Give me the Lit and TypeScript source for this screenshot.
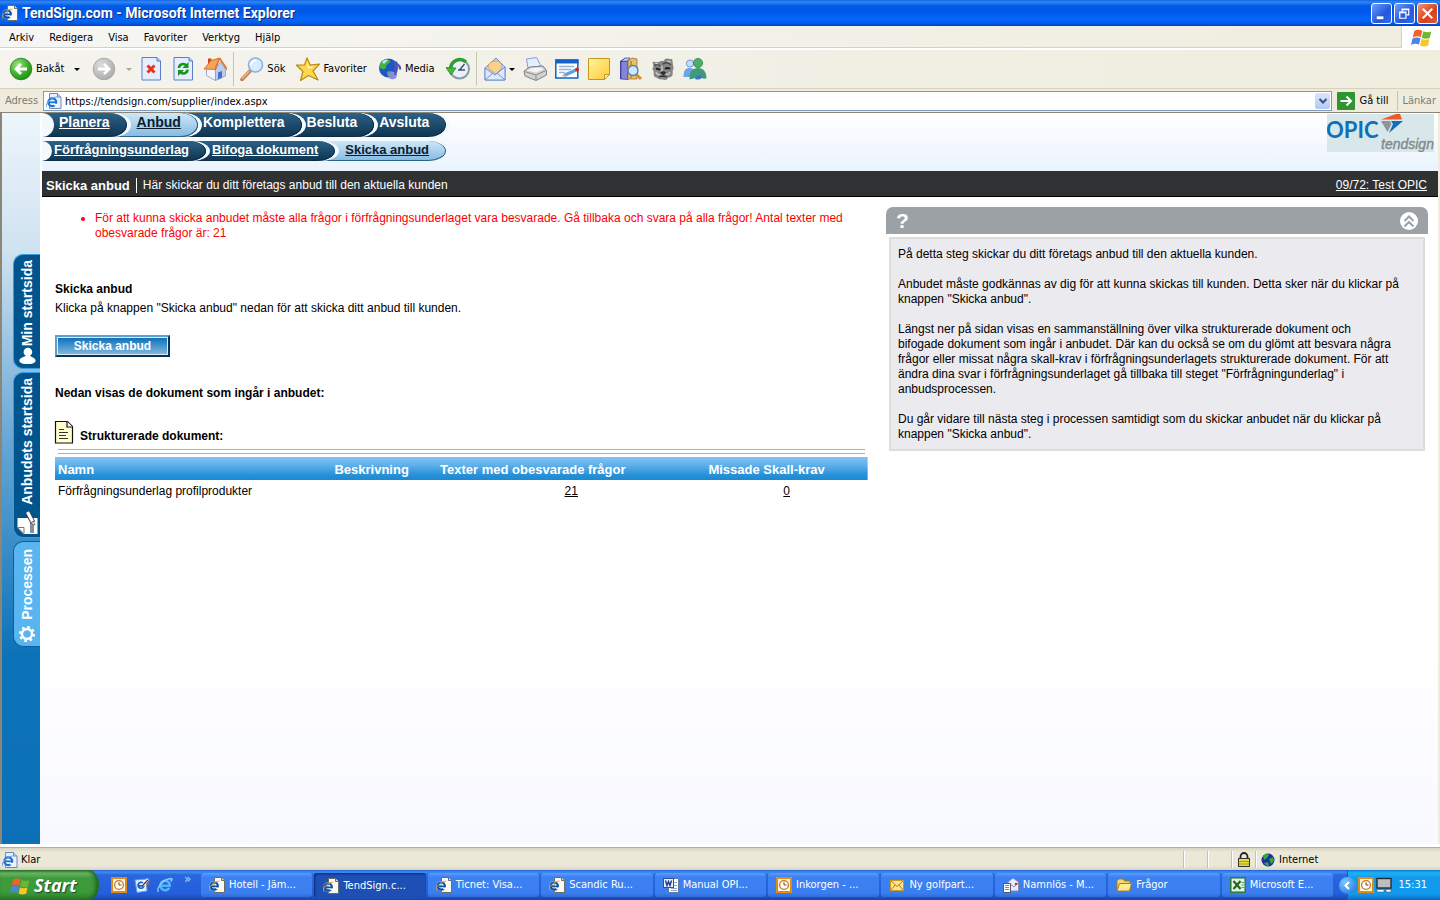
import { LitElement, html, css, svg, nothing, TemplateResult } from "lit";
import { customElement, property } from "lit/decorators.js";
import { classMap } from "lit/directives/class-map.js";

const E_GLYPH = svg`
  <circle cx="8" cy="8.5" r="4.6" fill="none" stroke="#1b6fd0" stroke-width="2.6"/>
  <path d="M4 8.6h8.6" stroke="#1b6fd0" stroke-width="2"/>
  <path d="M9.5 10.3h5v2.2h-4z" fill="#fff"/>
  <path d="M1 14.5C-.5 11 6 2.5 14.6 2" fill="none" stroke="#59a8ee" stroke-width="1.3"/>`;

const PAGE = svg`<path d="M5.500.5h7l3 3v12h-10z" fill="#fbfaf2" stroke="#6c6c66"/><path d="M12.500.5v3h3" fill="#ddd" stroke="#6c6c66"/>`;

const CLOCK = svg`
  <rect x="1" y="1" width="14" height="14" fill="#fff6e0" stroke="#e08a1c" stroke-width="2"/>
  <circle cx="8" cy="8" r="4.4" fill="#fff" stroke="#c8741a" stroke-width="1.3"/>
  <path d="M8 5.2V8h2.4" fill="none" stroke="#6b4a20"/>`;

const FLAG = svg`
  <path d="M2.6 3.2C5 1.6 7 2 9 3L7.8 8.2C5.8 7.2 3.8 7.2 1.4 8.4z" fill="#f0612c"/>
  <path d="M9.8 3.3c2 1 4 1.2 6.4.2L15 8.8c-2.400.9-4.300.8-6.400-.2z" fill="#6cb82f"/>
  <path d="M1.200 9.200c2.400-1.200 4.400-1.100 6.400-.2L6.400 14.200C4.400 13.200 2.400 13.200 0 14.400z" fill="#4a86e0"/>
  <path d="M8.400 9.400c2 1 4 1.200 6.400.2L13.600 14.900c-2.400.9-4.400.8-6.400-.2z" fill="#f8c52c"/>`;

const ICONS: Record<string, { box: number; art: TemplateResult | unknown }> = {
  iepage: { box: 16, art: svg`${PAGE}<g transform="translate(-.5 3) scale(.72)"><circle cx="8" cy="8.500" r="7" fill="#fff" opacity=".6"/><circle cx="8" cy="8.500" r="5" fill="none" stroke="#0b4fa8" stroke-width="3"/><path d="M4 8.800h9" stroke="#0b4fa8" stroke-width="2.200"/><path d="M10 10.500h6v2.300h-5z" fill="#fff"/><path d="M1 15C-.5 11 6 2 15 1.500" fill="none" stroke="#e8a020" stroke-width="1.300"/></g>` },
  iedoc: { box: 16, art: svg`<path d="M3.500.5h8l3.500 3.500v11.500H3.500z" fill="#e8f0ff" stroke="#7088b8"/><path d="M11.500.5V4H15" fill="#c0d0f0" stroke="#7088b8"/><g transform="translate(-.5 2) scale(.85)">${E_GLYPH}</g>` },
  ielight: { box: 16, art: svg`<path d="M12.200 10.800A4.700 4.700 0 1 1 12.800 8.700H4" fill="none" stroke="#54b4f8" stroke-width="2.500"/><path d="M1.500 15C-1 12 5 2 14.500 1.500c1.500.5 0 2-1 3" fill="none" stroke="#8ed0ff" stroke-width="1.300"/>` },
  flag: { box: 16, art: FLAG },
  clock: { box: 16, art: CLOCK },
  back: { box: 24, art: svg`<defs><radialGradient id="backfill" cx=".35" cy=".3" r=".8"><stop offset="0" stop-color="#9be37c"/><stop offset=".6" stop-color="#3aae2a"/><stop offset="1" stop-color="#1d8416"/></radialGradient></defs><circle cx="12" cy="12" r="10.800" fill="url(#backfill)" stroke="#2a7f22" stroke-width=".8"/><path d="M18 12H8M12 7l-5 5 5 5" fill="none" stroke="#fff" stroke-width="2.800"/>` },
  forward: { box: 24, art: svg`<defs><radialGradient id="forwardfill" cx=".35" cy=".3" r=".8"><stop offset="0" stop-color="#dcdcdc"/><stop offset="1" stop-color="#a9a9a9"/></radialGradient></defs><circle cx="12" cy="12" r="10.800" fill="url(#forwardfill)" stroke="#a0a0a0" stroke-width=".8"/><path d="M6 12h10M12 7l5 5-5 5" fill="none" stroke="#fff" stroke-width="2.800"/>` },
  stop: { box: 24, art: svg`<path d="M3 .5h15L21.500 4v19H3z" fill="#e4eeff" stroke="#5b7fc8"/><path d="M18 .5V4h3.500" fill="#b8ccf4" stroke="#5b7fc8"/><path d="M8.500 8.500l7 7M15.500 8.500l-7 7" stroke="#e8341c" stroke-width="3"/>` },
  refresh: { box: 24, art: svg`<path d="M3 .5h15L21.500 4v19H3z" fill="#e4eeff" stroke="#5b7fc8"/><path d="M18 .5V4h3.500" fill="#b8ccf4" stroke="#5b7fc8"/><path d="M8 11c0-4 5-5 7.500-2.500" fill="none" stroke="#16951c" stroke-width="2.500"/><path d="M17.500 5v6h-6z" fill="#16951c"/><path d="M16.500 12.500c0 4-5 5-7.500 2.500" fill="none" stroke="#16951c" stroke-width="2.500"/><path d="M7 19v-6h6z" fill="#16951c"/>` },
  home: { box: 24, art: svg`<path d="M5 1.500h3.500v7H5z" fill="#c84a1c"/><path d="M3.500 12v6.500l9 5V13L8 8z" fill="#f4f6ff" stroke="#8a9cc8" stroke-width=".8"/><path d="M12.500 23.500V12l5-7 5 7v7z" fill="#b9ccf2" stroke="#8a9cc8" stroke-width=".8"/><path d="M1 12l7-8.500L16.500 1 12 12.500z" fill="#f6a456" stroke="#d0641c" stroke-width=".8"/><path d="M16.500 1L12 13M16.500 1L24 12.500" fill="none" stroke="#e07830" stroke-width="1.800"/><path d="M15 15.500l4-1.500v6.500l-4 2z" fill="#4d6fc0"/>` },
  search: { box: 24, art: svg`<path d="M10 14L2 22.500" stroke="#c07a50" stroke-width="3.600" stroke-linecap="round"/><path d="M9.500 14L2 22" stroke="#f0b890" stroke-width="1.400"/><circle cx="15.500" cy="8" r="7" fill="#d8ecff" stroke="#8db0e0" stroke-width="1.600"/><path d="M11 8a5 5 0 0 1 5-4.500" fill="none" stroke="#fff" stroke-width="2"/>` },
  star: { box: 24, art: svg`<path d="M11 1l3.200 7.200 9.300-1-6.500 6.800 5 9-9.500-4.500L4.500 23.500l2.500-9L.5 8.200l8-.2z" fill="#ffd84a" stroke="#b98a12" stroke-width="1.200" stroke-linejoin="round"/><path d="M11 4l2 5.500 6-.5-7 3z" fill="#fff6b8"/>` },
  media: { box: 24, art: svg`<circle cx="10.500" cy="11" r="9.500" fill="#1f56c4"/><path d="M3 5c4-4 8-3 9-1s-4 3-4 6-5 3-6.500 0zM9 15c2-2 6-1 6 1-1 3-4 3-6 2z" fill="#3fb53c"/><path d="M4 5c2-2 4-2.500 6-2l-4 4z" fill="#bfe8ff"/><ellipse cx="14.500" cy="18.500" rx="4.200" ry="3.800" fill="#8c8ce0"/><path d="M17.500 18V4.500c1 4 5.500 3 4.500 8" fill="none" stroke="#5454b0" stroke-width="2.200"/>` },
  history: { box: 24, art: svg`<circle cx="13.500" cy="12" r="9.500" fill="#e9f1f8" stroke="#8d98a5" stroke-width="2"/><path d="M13.500 13l5-6M12 13h7" stroke="#405068" stroke-width="1.400"/><path d="M4.500 13c0-10 10-13 15.500-8" fill="none" stroke="#2f9e32" stroke-width="3.400"/><path d="M0 10.500l10 .5-5 7z" fill="#45b843" stroke="#1d7a20" stroke-width=".7"/>` },
  mail: { box: 24, art: svg`<path d="M2 11L13 1l9 9v13H2z" fill="#c4d8fa" stroke="#6f8fd0"/><path d="M5 11c0-5 4-7 8-7s6 3 6 7l-6 6z" fill="#fbd08a" stroke="#d89848" stroke-width=".8"/><path d="M2 11l10 7 10-8v13H2z" fill="#dceaff" stroke="#6f8fd0"/><path d="M2 23l8-7M22 23l-8-7" stroke="#6f8fd0"/>` },
  print: { box: 24, art: svg`<path d="M5 11L3.500 2l10-1.500L18 9z" fill="#e3eeff" stroke="#7f9fd8"/><path d="M1 14l6-4 13-1 3.500 4.500v4.500L13 23.500 2 19z" fill="#d2d2d2" stroke="#808080"/><path d="M1.500 14.500L13 18l10-4.500" fill="none" stroke="#8a8a8a"/><path d="M13 18v5" stroke="#8a8a8a"/><path d="M4 13.500l5-2.500 9-.5 2 2-7 3z" fill="#f4f4f4"/>` },
  edit: { box: 24, art: svg`<rect x=".8" y="3" width="22" height="18" fill="#fff" stroke="#1262c8" stroke-width="1.500"/><path d="M.5 2.500h23v4H.5z" fill="#1262c8"/><path d="M4 9.500h15M4 12.500h12M4 15.500h6" stroke="#9ab4d8" stroke-width="1.300"/><path d="M9 18.500l12-5.500" stroke="#5b9ff0" stroke-width="3.400"/><path d="M6.500 19.500l3-3 1.200 2.500z" fill="#e8b060"/><circle cx="22" cy="12.500" r="2" fill="#d02c1c"/>` },
  note: { box: 24, art: svg`<defs><linearGradient id="notefill" x2="1" y2="1"><stop offset="0" stop-color="#fff6a0"/><stop offset="1" stop-color="#ffc936"/></linearGradient></defs><path d="M1.500 1.500h21v16l-5 5h-16z" fill="url(#notefill)" stroke="#c8961a"/><path d="M22.500 17.500h-5v5z" fill="#fff0a0" stroke="#c8961a"/>` },
  research: { box: 24, art: svg`<path d="M1 4l5-3v19l-5 2.500z" fill="#4a4aa8"/><path d="M2 22V4.500l7-.5v18.500z" fill="#8484d8" stroke="#38388c" stroke-width=".7"/><path d="M2 4.500L6 1h5L9 4z" fill="#c8c8f4" stroke="#38388c" stroke-width=".7"/><path d="M9 4l4-3 5 1v20H9z" fill="#e8c070" stroke="#8a6420" stroke-width=".7"/><path d="M12 4v17" stroke="#8a6420"/><path d="M17 17l5 5" stroke="#d89030" stroke-width="3"/><circle cx="14" cy="13.500" r="5" fill="#cfe6ff" stroke="#5a7ab0" stroke-width="1.300"/>` },
  bulldog: { box: 24, art: svg`<path d="M1.500 5c3-.5 4 .5 6 0s2.500-2 4-1 2-2.500 4-2.500 3 1 5.500.5c1 2.500.5 4 1 6s1 3 0 5 .5 4-1 6-3 .5-4.500 2.500-3 1.500-5 1-3 .5-4.500-1S4 21 3 19 3.500 15 2 13s1-3 .5-4.500S2 6.500 1.500 5z" fill="#858585"/><path d="M3 9c2-2 4-2 6 0M12 7c2-1.500 5-2 8 1" fill="none" stroke="#4a4a4a" stroke-width="1.600"/><path d="M5 12c2-1 3 0 4 1M14 12c2-1.500 4-1 5 0" fill="none" stroke="#1f1f1f" stroke-width="2"/><path d="M11 9v6M5 15c1 3 3 3 4 2M19 15c-1 2-2 3-4 2" fill="none" stroke="#c9c9c9" stroke-width="1.400"/><path d="M9.500 15.500c2-1 4-1 5 0l-2 2.500zM8 20c2-1.500 6-1.500 8 0" fill="#2c2c2c" stroke="#2c2c2c"/><path d="M4 6l3 1M16 4l4 1" stroke="#d8d8d8"/>` },
  messenger: { box: 24, art: svg`<circle cx="7" cy="6.500" r="3.600" fill="#c4ddff" stroke="#5b86c8" stroke-width=".8"/><path d="M.5 20c0-7 2-9 6.500-9s5.500 4 5.500 9z" fill="#6ea4e8"/><circle cx="15" cy="6" r="4.600" fill="#4fae62" stroke="#2c7e5c" stroke-width=".8"/><path d="M6.500 22.500c0-8 3-11.500 8.500-11.500s8.500 4 8.500 10c-2 2-4 0-6-1s-6 2-11 2.500z" fill="#3f9a78"/><path d="M12 22c1-4 5-5 8-2-3 3-6 3-8 2z" fill="#3b74c4"/>` },
  go: { box: 18, art: svg`<rect width="18" height="18" rx="1" fill="#2e962e"/><path d="M3.500 9h10M9.500 4.500L14 9l-4.500 4.500" fill="none" stroke="#fff" stroke-width="2"/>` },
  caret: { box: 8, art: svg`<path d="M1 3h6L4 6z" fill="currentColor"/>` },
  chevdown: { box: 10, art: svg`<path d="M1.500 3L5 6.500 8.500 3" fill="none" stroke="#3a5180" stroke-width="2"/>` },
  minimize: { box: 20, art: svg`<path d="M5 13h7v3H5z" fill="#fff"/>` },
  restore: { box: 20, art: svg`<path d="M7.500 9V5.500h7v6H12M7 5.800h8" fill="none" stroke="#fff" stroke-width="1.300"/><path d="M5 8.500h6.500V15H5zM4.500 9h7.500" fill="none" stroke="#fff" stroke-width="1.300"/>` },
  close: { box: 20, art: svg`<path d="M5 5l10 10M15 5L5 15" stroke="#fff" stroke-width="2.200"/>` },
  person: { box: 20, art: svg`<circle cx="11" cy="5.500" r="4.800" fill="#fff"/><path d="M9 8.500h4c0 3 6.500 2.500 6.500 6.500 0 3-4 4-9 4s-9-1-9-4c0-4 7.500-3.500 7.500-6.500z" fill="#fff"/>` },
  docpen: { box: 24, art: svg`<path d="M2.500 8h20v16H8.500l-6-6z" fill="#fff"/><path d="M2.500 17.500h6.500v6z" fill="#fff" stroke="#777"/><path d="M15 13h4v10h-4z" fill="#8a8f94"/><path d="M13 3.500l5 9" stroke="#444" stroke-width="5"/><path d="M12.500 2l5 9.500" stroke="#fff" stroke-width="3.200"/><path d="M20 15l-4.500-2 3-1.500z" fill="#fff" stroke="#444" stroke-width=".6"/>` },
  gear: { box: 20, art: svg`<circle cx="10" cy="10" r="5.600" fill="none" stroke="#fff" stroke-width="2.600"/><circle cx="10" cy="10" r="7.800" fill="none" stroke="#fff" stroke-width="2.400" stroke-dasharray="3.060 3.060"/>` },
  file: { box: 24, art: svg`<path d="M3.500 1.500h12l5 5V23h-17z" fill="#ffffd0" stroke="#111" stroke-width="1.200"/><path d="M15 1.500V7h5.500" fill="#fff" stroke="#111" stroke-width="1.200"/><path d="M7 9.500h5M7 12.500h9M7 15.500h7M7 18.500h9" stroke="#333" stroke-width="1.200"/>` },
  up: { box: 20, art: svg`<circle cx="10" cy="10" r="9" fill="#fff"/><path d="M5.500 10L10 5.500l4.500 4.500M5.500 15.500L10 11l4.500 4.500" fill="none" stroke="#9ca1a5" stroke-width="2"/>` },
  lock: { box: 16, art: svg`<path d="M4.500 7V4.500a3.500 3.500 0 0 1 7 0V7" fill="none" stroke="#222" stroke-width="1.800"/><rect x="2.500" y="6.500" width="11" height="8" fill="#e6dc3c" stroke="#333"/><path d="M3 9.500h10M3 12h10" stroke="#a39a20"/>` },
  globe: { box: 16, art: svg`<circle cx="8" cy="8" r="6.500" fill="#1b2f9c"/><path d="M3 4c2-3 5-2.500 6-1L7 6 4 8zM9 7l4-2 1 4-3 3zM4 11l4-1 1 4-3-.5z" fill="#2fa83a"/>` },
  desk: { box: 16, art: svg`<path d="M1 3l11-1 1 12-10 1.500z" fill="#e6f3ff" stroke="#4f9fe8"/><path d="M9.500 10A3 3 0 1 1 10 8.800H4.500" fill="none" stroke="#1b5fc0" stroke-width="1.700"/><path d="M9 8l5.500-6" stroke="#fff" stroke-width="3"/><path d="M9 8l5.500-5.500" stroke="#333" stroke-width="1.300"/><path d="M12 7.500l3-1" stroke="#d0682c" stroke-width="1.500"/>` },
  word: { box: 16, art: svg`<path d="M5.500 1.500h10v14h-10z" fill="#fff" stroke="#6078a8"/><path d="M11 5.500h3M11 8.500h3M8 11.500h6M8 13.500h6" stroke="#8fa4cc"/><rect x=".5" y="1.500" width="10" height="9" fill="#e7eefc" stroke="#2f4f9c"/><path d="M2.500 3.500l1.500 5 1.500-4 1.500 4 1.500-5" fill="none" stroke="#1c3c90" stroke-width="1.400"/>` },
  letter: { box: 16, art: svg`<rect x="1.500" y="3.500" width="13" height="10" fill="#ffe48a" stroke="#c99a2a"/><path d="M2 4l6 5.500L14 4M2 13l4-5M14 13l-4-5" fill="none" stroke="#b07e18"/>` },
  draft: { box: 16, art: svg`<path d="M5 5l5-4 5.500 4v9H5z" fill="#e8eefc" stroke="#7f8db8"/><path d="M6 6l5 4 4-4" fill="none" stroke="#7f8db8"/><circle cx="13" cy="7" r="1.300" fill="#d83020"/><path d="M.5 6.500h7v9h-7z" fill="#fff" stroke="#556"/><path d="M2 8.500h4M2 10.500h4M2 12.500h4" stroke="#6f86b8"/>` },
  folder: { box: 16, art: svg`<path d="M1 13.500V3.500L3 2h4l1.500 2H14v3" fill="#f8d868" stroke="#a87c18"/><path d="M1 14L3.500 6.500H15.500L13.500 14z" fill="#ffe992" stroke="#a87c18"/>` },
  excel: { box: 16, art: svg`<rect x=".8" y=".8" width="14.400" height="14.400" fill="#e4f2e0" stroke="#2c7a34" stroke-width="1.500"/><path d="M3.500 4l7 8M10.500 4l-7 8" stroke="#1b6a28" stroke-width="2.200"/><path d="M11.500 5.500H14M11.500 8H14M11.500 10.500H14" stroke="#5aa060"/>` },
  screen: { box: 16, art: svg`<rect x="1" y="1.500" width="14" height="9.500" fill="#bdbdbd" stroke="#20242c" stroke-width="1.300"/><path d="M1 12.500h7v2.500H1zM10 12.500h5v2.500h-5z" fill="#fff" stroke="#555" stroke-width=".6"/>` },
};

const icon = (name: string, size?: number) => {
  const { box, art } = ICONS[name];
  const s = size ?? box;
  return html`<svg aria-hidden="true" width=${s} height=${s} viewBox="0 0 ${box} ${box}">${art}</svg>`;
};

const base = css`
  * { box-sizing: border-box; }
  svg { display: block; flex: none; }
  button { border: 0; padding: 0; margin: 0; background: none; font: inherit; color: inherit; }
  a { color: inherit; }
`;

@customElement("process-steps")
class ProcessSteps extends LitElement {
  @property({ attribute: false }) steps: { label: string; link?: boolean; active?: boolean }[] = [];
  @property({ type: Boolean }) sub = false;
  static styles = [base, css`
    :host { display: block; }
    .row { display: flex; list-style: none; margin: 0; padding: 0; font: bold 14px/17px "Liberation Sans", Arial, sans-serif; isolation: isolate; }
    .start, .step { border-radius: 0 18px 18px 0 / 0 12px 12px 0; height: 24px; box-shadow: 4px 0 0 #f4f9fe; }
    .start { width: 12px; border-radius: 0 12px 12px 0 / 0 12px 12px 0; background: #f4f9fe; z-index: 9; box-shadow: none; flex: none; }
    .step { display: block; margin-left: -16px; padding: 1px 16px 0 21px; white-space: nowrap; color: #fff; background: linear-gradient(#2c6288, #103552); border: 1px solid #0c2c46; border-width: 0 1px 1px 0; }
    .start + .step { margin-left: -12px; padding-left: 17px; }
    .active { color: #0c1c2c; background: linear-gradient(#cfe7f8, #86bce2); border-color: #2c6288; padding-left: 26px; padding-right: 16px; }
    .sub { font-size: 13px; }
    .sub .start, .sub .step { height: 20px; }
    .sub .start { width: 10px; border-radius: 0 10px 10px 0 / 0 10px 10px 0; }
    .sub .step { border-radius: 0 18px 18px 0 / 0 10px 10px 0; padding-top: 0; padding-left: 22px; }
    .sub .start + .step { margin-left: -10px; padding-left: 12px; }
    .sub .active { padding-left: 26px; }
  `];
  render() {
    const n = this.steps.length;
    return html`<ol class=${classMap({ row: true, sub: this.sub })}>
      <li class="start" role="presentation"></li>
      ${this.steps.map((s, i) => html`<li class=${classMap({ step: true, active: !!s.active })} style="z-index:${n - i}">
        ${s.link ? html`<a href="#">${s.label}</a>` : s.label}</li>`)}
    </ol>`;
  }
}

@customElement("side-tabs")
class SideTabs extends LitElement {
  static styles = [base, css`
    :host { display: flex; flex-direction: column; align-items: flex-end; gap: 3px; width: 38px; padding-top: 141px; background: linear-gradient(#eef6fc, #cfe2f0 137px, #62a4d4 337px, #0d73b9 540px, #0b70b8); }
    .tab { width: 27px; padding: 5px 0 3px; display: flex; flex-direction: column; align-items: center; justify-content: space-between; border: 1px solid #3d9be0; border-right: 0; border-radius: 10px 0 0 10px; background: #00558f; color: #fff; text-decoration: none; font: bold 14px/16px "Liberation Sans", Arial, sans-serif; }
    .label { writing-mode: vertical-rl; transform: rotate(180deg); white-space: nowrap; }
    .home { min-height: 115px; }
    .bid { min-height: 166px; }
    .current { min-height: 106px; padding-top: 7px; background: #58b5f0; border-color: #0b5f9f; }
  `];
  render() {
    return html`
      <a class="tab home" href="#"><span class="label">Min startsida</span>${icon("person", 18)}</a>
      <a class="tab bid" href="#"><span class="label">Anbudets startsida</span>${icon("docpen")}</a>
      <a class="tab current" href="#"><span class="label">Processen</span>${icon("gear", 18)}</a>`;
  }
}

@customElement("supplier-page")
class SupplierPage extends LitElement {
  static styles = [base, css`
    :host { display: grid; grid-template-columns: auto 1fr; font: 12px/15px "Liberation Sans", Arial, sans-serif; color: #000; background: #fff; }
    .body { background: linear-gradient(#fff, #fff 540px, #f8f9ff); padding-left: 2px; min-width: 0; }
    .top { display: flex; justify-content: space-between; height: 58px; background: linear-gradient(#fff, #eaf3fd); padding-right: 4px; }
    .navs { display: grid; gap: 4px; align-content: start; }
    .logo { width: 107px; height: 38px; background: #d8e8ea; margin-top: 1px; }
    .heading { display: flex; align-items: center; gap: 6px; height: 26px; padding: 4px 11px 0 4px; color: #fff; background: #303133; border-bottom: 1px solid #000; }
    .heading h1 { margin: 0; font: bold 13px/15px "Liberation Sans", Arial, sans-serif; padding-right: 6px; border-right: 1px solid #fff; }
    .customer { margin-left: auto; }
    .cols { display: grid; grid-template-columns: minmax(0, 3fr) minmax(0, 2fr); gap: 18px; padding: 10px 10px 0 13px; align-items: start; }
    .errors { margin: 4px 0 0; padding-left: 40px; color: #f00; }
    h2 { margin: 0; font: bold 12px/15px "Liberation Sans", Arial, sans-serif; }
    .lead { margin: 4px 0 19px; }
    .errors + h2 { margin-top: 41px; }
    .send { display: block; width: 115px; height: 22px; border: 2px solid; border-color: #5f9fd0 #0a3354 #0a3354 #5f9fd0; box-shadow: inset 0 0 0 1px #dceaf6; background: linear-gradient(#0b6cb6, #84bce4); color: #fff; font: bold 12px/16px "Liberation Sans", Arial, sans-serif; }
    .included { margin-top: 29px; }
    .doc { display: flex; align-items: flex-end; gap: 4px; margin: 19px 0 5px -3px; }
    .rules { height: 5px; margin: 0 3px 3px; border: 1px solid #78bdec; border-width: 1px 0; }
    table { width: 100%; border-collapse: collapse; table-layout: fixed; }
    .c1 { width: 34%; } .c2 { width: 13%; } .c3 { width: 33%; } .c4 { width: 20%; }
    thead tr { background: linear-gradient(#84c3f2, #5fb0ea 35%, #2490d8 80%, #1f88cf); }
    th { height: 23px; padding: 2px 3px 0; text-align: left; color: #fff; font: bold 13px/15px "Liberation Sans", Arial, sans-serif; white-space: nowrap; }
    td { padding: 4px 3px; }
    .num { text-align: center; }
    .bar { display: flex; justify-content: space-between; align-items: center; height: 27px; padding: 0 9px 0 10px; background: #9ca1a5; border-radius: 7px 7px 0 0; color: #fff; font: bold 21px/24px "Liberation Sans", Arial, sans-serif; }
    .help { margin: 3px 3px 0; padding: 8px 7px 7px; background: #ebeaee; border: 2px solid #dcdcdc; }
    .help p { margin: 0 0 15px; }
    .help p:last-child { margin: 0; }
  `];
  render() {
    return html`
      <side-tabs></side-tabs>
      <div class="body">
        <div class="top">
          <nav class="navs">
            <process-steps .steps=${[{ label: "Planera", link: true }, { label: "Anbud", link: true, active: true }, { label: "Komplettera" }, { label: "Besluta" }, { label: "Avsluta" }]}></process-steps>
            <process-steps sub .steps=${[{ label: "Förfrågningsunderlag", link: true }, { label: "Bifoga dokument", link: true }, { label: "Skicka anbud", link: true, active: true }]}></process-steps>
          </nav>
          <svg class="logo" viewBox="0 0 107 38" role="img" aria-label="OPIC tendsign">
            <path d="M54 5.500L69 0h4l2 5.500z" fill="#f0582a"/>
            <path d="M54 7h9l1.500 3-4 8z" fill="#8f9498"/><path d="M64 7h12L62 19l4-9z" fill="#0f6fb8"/>
            <text x="-1" y="24" font-family="Lato, sans-serif" font-weight="bold" font-size="22" fill="#0f6fb8">OPIC</text>
            <text x="54" y="35" font-family="Liberation Sans, Arial, sans-serif" font-style="italic" font-size="14" fill="#84898d" stroke="#84898d" stroke-width=".4">tendsign</text>
          </svg>
        </div>
        <header class="heading"><h1>Skicka anbud</h1><span>Här skickar du ditt företags anbud till den aktuella kunden</span><a class="customer" href="#">09/72: Test OPIC</a></header>
        <div class="cols">
          <main>
            <ul class="errors"><li>För att kunna skicka anbudet måste alla frågor i förfrågningsunderlaget vara besvarade. Gå tillbaka och svara på alla frågor! Antal texter med obesvarade frågor är: 21</li></ul>
            <h2>Skicka anbud</h2>
            <p class="lead">Klicka på knappen "Skicka anbud" nedan för att skicka ditt anbud till kunden.</p>
            <button class="send">Skicka anbud</button>
            <h2 class="included">Nedan visas de dokument som ingår i anbudet:</h2>
            <div class="doc">${icon("file")}<h2>Strukturerade dokument:</h2></div>
            <div class="rules"></div>
            <table>
              <colgroup><col class="c1"><col class="c2"><col class="c3"><col class="c4"></colgroup>
              <thead><tr><th>Namn</th><th>Beskrivning</th><th>Texter med obesvarade frågor</th><th>Missade Skall-krav</th></tr></thead>
              <tbody><tr><td>Förfrågningsunderlag profilprodukter</td><td></td><td class="num"><a href="#">21</a></td><td class="num"><a href="#">0</a></td></tr></tbody>
            </table>
          </main>
          <aside>
            <div class="bar"><span>?</span><button aria-label="Dölj hjälp">${icon("up")}</button></div>
            <div class="help">
              <p>På detta steg skickar du ditt företags anbud till den aktuella kunden.</p>
              <p>Anbudet måste godkännas av dig för att kunna skickas till kunden. Detta sker när du klickar på knappen "Skicka anbud".</p>
              <p>Längst ner på sidan visas en sammanställning över vilka strukturerade dokument och<br>bifogade dokument som ingår i anbudet. Där kan du också se om du glömt att besvara några<br>frågor eller missat några skall-krav i förfrågningsunderlagets strukturerade dokument. För att<br>ändra dina svar i förfrågningsunderlaget gå tillbaka till steget "Förfrågningunderlag" i<br>anbudsprocessen.</p>
              <p>Du går vidare till nästa steg i processen samtidigt som du skickar anbudet när du klickar på knappen "Skicka anbud".</p>
            </div>
          </aside>
        </div>
      </div>`;
  }
}

@customElement("xp-taskbar")
class XpTaskbar extends LitElement {
  static styles = [base, css`
    :host { display: flex; height: 30px; background: linear-gradient(#1f5fd4, #3f8cf2 2px, #2a66de 5px, #245edb 24px, #1a44a8); color: #fff; font-size: 11px; }
    .start { display: flex; align-items: center; gap: 5px; width: 99px; padding-left: 10px; border-radius: 0 10px 10px 0 / 0 15px 15px 0; background: linear-gradient(#2f7d2f, #6cb868 3px, #3f9a3c 8px, #3c9a3a 22px, #2c7a2c); box-shadow: inset -3px 0 4px #1f5f24; font: italic bold 18px/28px "Open Sans", sans-serif; text-shadow: 1px 1px 1px #1c4a1c; }
    .quick { display: flex; align-items: center; gap: 7px; padding: 0 8px 0 12px; width: 102px; }
    .more { align-self: flex-start; font-size: 13px; line-height: 17px; padding-left: 4px; color: #b8d4ff; }
    .tasks { display: flex; flex: 1; gap: 2px; padding: 3px 14px 3px 0; min-width: 0; }
    .task { flex: 1; min-width: 0; display: flex; align-items: center; gap: 4px; padding: 0 8px; border-radius: 3px; background: linear-gradient(#5c9dfb, #3c81f3 4px, #3b7ef0 20px, #2f6cdc); white-space: nowrap; }
    .pressed { background: #1d4fb4; box-shadow: inset 1px 1px 2px #0c2c78; padding: 2px 7px 0 9px; }
    .tray { display: flex; align-items: center; gap: 2px; width: 93px; background: linear-gradient(#0d7ad8, #20b0f4 3px, #129aec 8px, #109bee 24px, #0c68c0); border-left: 1px solid #0b5fb8; }
    .expand { width: 17px; height: 17px; margin-left: -9px; border-radius: 50%; background: radial-gradient(circle at 35% 30%, #7cc8ff, #1a6fdc); display: grid; place-items: center; }
    .time { margin-left: auto; padding-right: 13px; }
  `];
  tasks = [["iepage", "Hotell - Jäm..."], ["iepage", "TendSign.c..."], ["iepage", "Ticnet: Visa..."], ["iepage", "Scandic Ru..."], ["word", "Manual OPI..."], ["clock", "Inkorgen - ..."], ["letter", "Ny golfpart..."], ["draft", "Namnlös - M..."], ["folder", "Frågor"], ["excel", "Microsoft E..."]];
  render() {
    return html`
      <button class="start">${icon("flag", 19)}Start</button>
      <div class="quick">${icon("clock")}${icon("desk")}${icon("ielight")}<span class="more">»</span></div>
      <div class="tasks">${this.tasks.map(([i, t]) => html`<button class=${classMap({ task: true, pressed: t.startsWith("Tend") })}>${icon(i)}${t}</button>`)}</div>
      <div class="tray"><button class="expand" aria-label="Visa dolda ikoner"><svg width="9" height="9" viewBox="0 0 9 9"><path d="M6 1L2.500 4.500 6 8" fill="none" stroke="#fff" stroke-width="2"/></svg></button>${icon("clock")}${icon("screen")}<span class="time">15:31</span></div>`;
  }
}

@customElement("app-root")
class AppRoot extends LitElement {
  static styles = [base, css`
    :host { display: flex; flex-direction: column; min-height: 100vh; font: 11px/14px "DejaVu Sans Condensed", "DejaVu Sans", sans-serif; color: #000; }
    .title { display: flex; align-items: center; height: 26px; padding: 0 2px; gap: 4px; color: #fff; background: linear-gradient(#1566e0, #2f86f8 2px, #0058e6 6px, #0058ea 12px, #0468fc 20px, #0055e0 24px, #0040b8); font: bold 14px/16px Roboto, sans-serif; text-shadow: 1px 1px #0a2a80; }
    .title span { flex: 1; }
    .ctl { width: 21px; height: 21px; border: 1px solid #fff; border-radius: 3px; background: linear-gradient(135deg, #6f9cf8, #2457dc 60%, #2f6cf0); margin-left: -2px; }
    .ctl svg { width: 19px; height: 19px; }
    .ctl.x { background: linear-gradient(135deg, #f09070, #d8401c 60%, #e05a30); }
    .menu { display: flex; height: 24px; background: linear-gradient(90deg, #f6f6f4, #efedde); border-bottom: 2px solid #fff; box-shadow: inset 0 -1px #d8d2bd; }
    .menu nav { display: flex; gap: 15px; flex: 1; padding: 5px 9px 3px; }
    .brand { width: 39px; background: #fff; display: grid; place-items: center; border-left: 1px solid #d8d2bd; }
    .tools { display: flex; align-items: center; height: 39px; padding-left: 5px; background: linear-gradient(90deg, #f4f3ee, #efedde); border-bottom: 1px solid #d8d2bd; }
    .tool { display: flex; align-items: center; gap: 3px; height: 32px; padding: 0 4px; }
    .tool.labelled { padding-right: 7px; }
    .tool.dim { padding-right: 2px; }
    .drop { width: 8px; margin-left: 6px; }
    .drop.tight { margin: 0 -1px 0 -2px; }
    .dim { color: #aca899; }
    .sep { width: 1px; height: 34px; background: #c8c4b0; margin: 0 2px; }
    .address { display: flex; align-items: center; height: 24px; padding: 2px 4px 1px 5px; background: #efecdd; border-bottom: 1px solid #8a8778; gap: 5px; }
    .grey { color: #7c7b74; }
    .box { display: flex; align-items: center; flex: 1; height: 20px; padding: 0 1px 0 2px; gap: 3px; background: #fff; border: 1px solid #7f9db9; }
    .box input { flex: 1; min-width: 0; border: 0; padding: 1px 0 0; outline: 0; background: none; font: inherit; color: #000; }
    .pick { width: 15px; height: 16px; background: linear-gradient(#dbe6fd, #b2c8f6); border-radius: 2px; display: grid; place-items: center; }
    .go { display: flex; align-items: center; gap: 4px; padding-right: 4px; }
    .links { border-left: 1px solid #c8c4b0; padding: 3px 0 3px 4px; }
    supplier-page { flex: 1; border-left: 2px solid #8a8778; border-right: 2px solid #efecdd; }
    .status { display: flex; align-items: center; height: 26px; background: linear-gradient(#fff, #fff 3px, #8f8b7c 3px, #d8d4c4 4px, #ebe8d8 8px, #ebe8d8 22px, #d8d4c0); padding: 5px 0 0 2px; gap: 3px; }
    .status .fill { flex: 1; }
    .pane { display: flex; align-items: center; gap: 3px; height: 17px; border-left: 1px solid #c5c1ae; box-shadow: inset 1px 0 #fff; padding-left: 4px; width: 21px; }
    .pane.zone { width: 185px; }
  `];
  render() {
    const tool = (i: string, label?: string) => html`<button class=${classMap({ tool: true, labelled: !!label })} aria-label=${label ?? i}>${icon(i)}${label ?? nothing}</button>`;
    return html`
      <div class="title">${icon("iepage")}<span>TendSign.com - Microsoft Internet Explorer</span>
        <button class="ctl" aria-label="Minimera">${icon("minimize")}</button><button class="ctl" aria-label="Återställ">${icon("restore")}</button><button class="ctl x" aria-label="Stäng">${icon("close")}</button></div>
      <div class="menu"><nav>${["Arkiv", "Redigera", "Visa", "Favoriter", "Verktyg", "Hjälp"].map((m) => html`<button>${m}</button>`)}</nav><div class="brand">${icon("flag", 20)}</div></div>
      <div class="tools">
        <button class="tool labelled">${icon("back")}Bakåt<span class="drop">${icon("caret")}</span></button>
        <button class="tool dim" aria-label="Framåt">${icon("forward")}<span class="drop">${icon("caret")}</span></button>
        ${tool("stop")}${tool("refresh")}${tool("home")}<span class="sep"></span>
        ${tool("search", "Sök")}${tool("star", "Favoriter")}${tool("media", "Media")}${tool("history")}<span class="sep"></span>
        <button class="tool" aria-label="E-post">${icon("mail")}<span class="drop tight">${icon("caret")}</span></button>
        ${tool("print")}${tool("edit")}${tool("note")}${tool("research")}${tool("bulldog")}${tool("messenger")}
      </div>
      <div class="address"><label class="grey" for="url">Adress</label>
        <div class="box">${icon("iedoc")}<input id="url" value="https://tendsign.com/supplier/index.aspx"><button class="pick" aria-label="Visa adresser">${icon("chevdown")}</button></div>
        <button class="go">${icon("go")}Gå till</button><span class="grey links">Länkar</span></div>
      <supplier-page></supplier-page>
      <div class="status">${icon("iedoc")}<span>Klar</span><span class="fill"></span><span class="pane"></span><span class="pane"></span><span class="pane">${icon("lock")}</span><span class="pane zone">${icon("globe")}Internet</span></div>
      <xp-taskbar></xp-taskbar>`;
  }
}
